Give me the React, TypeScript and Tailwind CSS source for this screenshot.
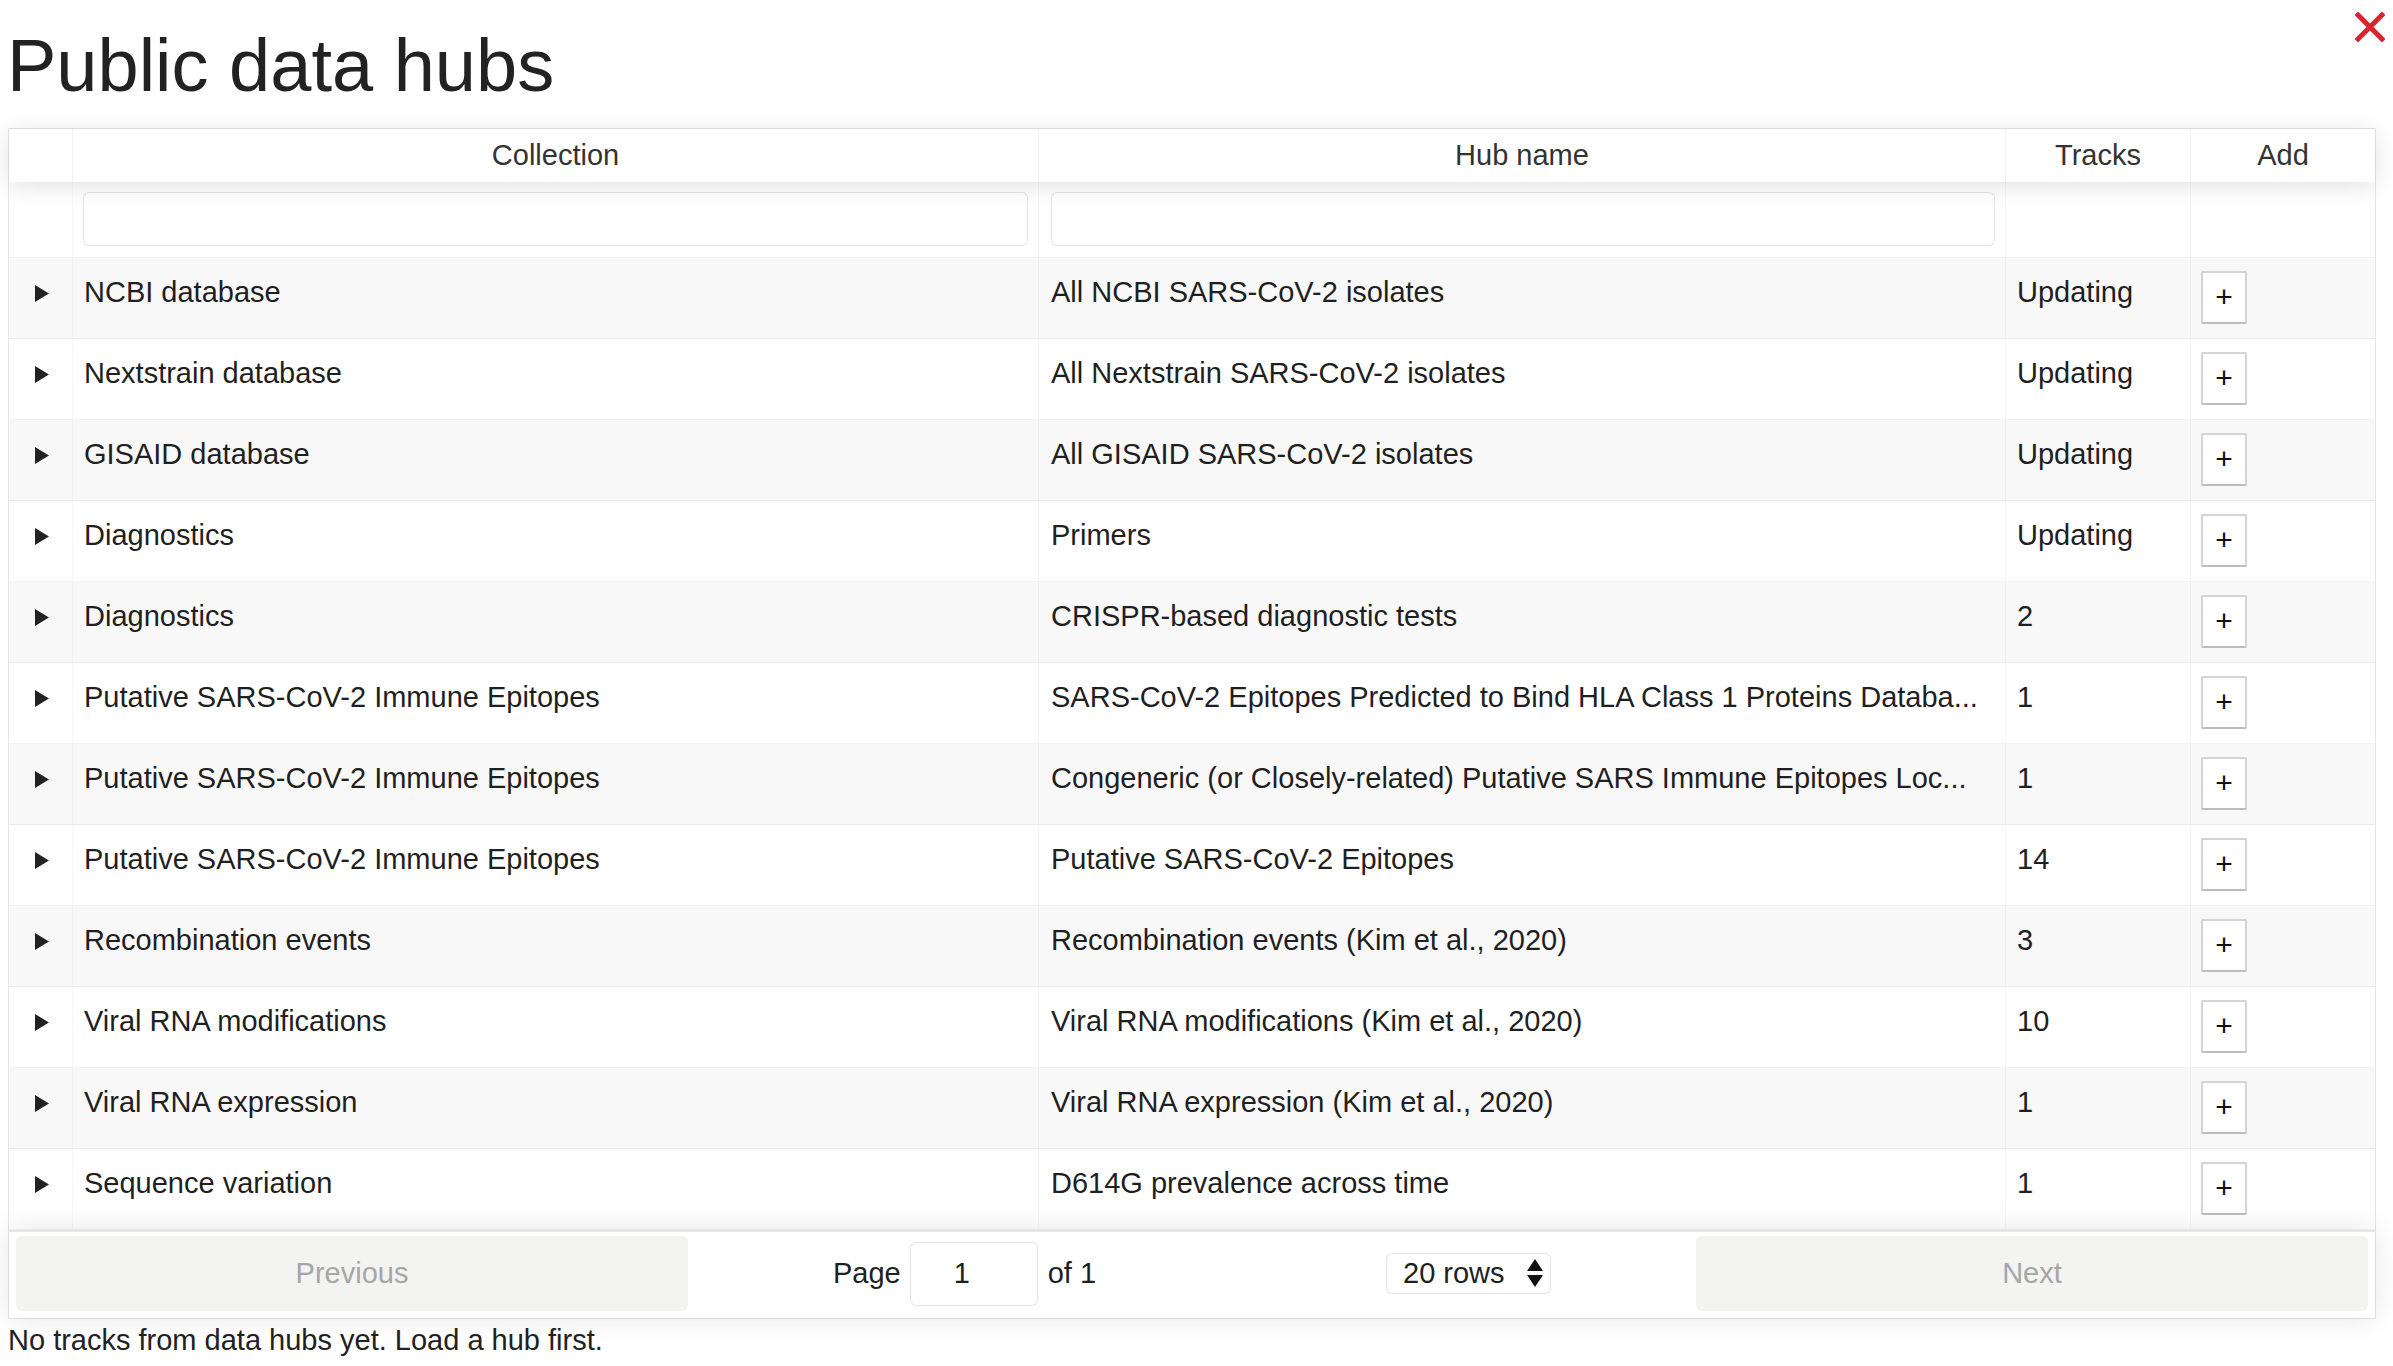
import React from "react";

type Row = { collection: string; hub: string; tracks: string };

const rows: Row[] = [
  { collection: "NCBI database", hub: "All NCBI SARS-CoV-2 isolates", tracks: "Updating" },
  { collection: "Nextstrain database", hub: "All Nextstrain SARS-CoV-2 isolates", tracks: "Updating" },
  { collection: "GISAID database", hub: "All GISAID SARS-CoV-2 isolates", tracks: "Updating" },
  { collection: "Diagnostics", hub: "Primers", tracks: "Updating" },
  { collection: "Diagnostics", hub: "CRISPR-based diagnostic tests", tracks: "2" },
  { collection: "Putative SARS-CoV-2 Immune Epitopes", hub: "SARS-CoV-2 Epitopes Predicted to Bind HLA Class 1 Proteins Databa...", tracks: "1" },
  { collection: "Putative SARS-CoV-2 Immune Epitopes", hub: "Congeneric (or Closely-related) Putative SARS Immune Epitopes Loc...", tracks: "1" },
  { collection: "Putative SARS-CoV-2 Immune Epitopes", hub: "Putative SARS-CoV-2 Epitopes", tracks: "14" },
  { collection: "Recombination events", hub: "Recombination events (Kim et al., 2020)", tracks: "3" },
  { collection: "Viral RNA modifications", hub: "Viral RNA modifications (Kim et al., 2020)", tracks: "10" },
  { collection: "Viral RNA expression", hub: "Viral RNA expression (Kim et al., 2020)", tracks: "1" },
  { collection: "Sequence variation", hub: "D614G prevalence across time", tracks: "1" },
];

const grid = "grid grid-cols-[64px_966px_967px_185px_1fr]";

export default function App() {
  return (
    <div className="relative w-[2393px] h-[1366px] bg-white text-[#1f1f1f] font-['Liberation_Sans',Arial,sans-serif] overflow-hidden">
      <button className="absolute left-[2355px] top-[12px] w-[30px] h-[30px]" aria-label="close">
        <svg width="30" height="30" viewBox="0 0 30 30">
          <path d="M3 3 L27 27 M27 3 L3 27" stroke="#d9232e" strokeWidth="5" strokeLinecap="square" />
        </svg>
      </button>

      <h1 className="pl-[7px] pt-[29px] text-[74px] leading-[74px] font-normal text-[#222]">Public data hubs</h1>

      <div className="ml-[8px] mt-[25px] w-[2368px] border border-[rgba(0,0,0,0.1)] text-[29px] leading-[33px]">
        {/* header */}
        <div className={`${grid} relative z-10 h-[53px] bg-white shadow-[0_4px_24px_0_rgba(0,0,0,0.12)] text-[#333]`}>
          <div className="border-r border-[rgba(0,0,0,0.05)]" />
          <div className="flex items-center justify-center border-r border-[rgba(0,0,0,0.05)]">Collection</div>
          <div className="flex items-center justify-center border-r border-[rgba(0,0,0,0.05)]">Hub name</div>
          <div className="flex items-center justify-center border-r border-[rgba(0,0,0,0.05)]">Tracks</div>
          <div className="flex items-center justify-center">Add</div>
        </div>
        {/* filters */}
        <div className={`${grid} h-[76px] bg-white border-b border-[rgba(0,0,0,0.05)]`}>
          <div className="border-r border-[rgba(0,0,0,0.03)]" />
          <div className="px-[10px] pt-[10px] border-r border-[rgba(0,0,0,0.03)]">
            <input className="w-full h-[54px] border border-[rgba(0,0,0,0.1)] rounded-[6px] bg-white outline-none" />
          </div>
          <div className="pl-[12px] pr-[10px] pt-[10px] border-r border-[rgba(0,0,0,0.03)]">
            <input className="w-full h-[54px] border border-[rgba(0,0,0,0.1)] rounded-[6px] bg-white outline-none" />
          </div>
          <div className="border-r border-[rgba(0,0,0,0.03)]" />
          <div />
        </div>
        {/* body */}
        {rows.map((r, i) => (
          <div
            key={i}
            className={`${grid} h-[81px] border-b border-[rgba(0,0,0,0.05)] ${i % 2 === 0 ? "bg-[#f8f8f8]" : "bg-white"}`}
          >
            <div className="pl-[26px] pt-[27px] border-r border-[rgba(0,0,0,0.03)]">
              <svg width="14" height="17" viewBox="0 0 14 17">
                <polygon points="0,0 14,8.5 0,17" fill="#222" />
              </svg>
            </div>
            <div className="pl-[11px] pr-[10px] pt-[18px] whitespace-nowrap overflow-hidden text-ellipsis border-r border-[rgba(0,0,0,0.03)]">
              {r.collection}
            </div>
            <div className="pl-[12px] pr-[8px] pt-[18px] whitespace-nowrap overflow-hidden text-ellipsis border-r border-[rgba(0,0,0,0.03)]">
              {r.hub}
            </div>
            <div className="pl-[11px] pt-[18px] border-r border-[rgba(0,0,0,0.03)]">{r.tracks}</div>
            <div className="pl-[10px] pt-[13px]">
              <button className="w-[46px] h-[53px] bg-white border-2 border-[#d4d4d4] border-b-[#bcbcbc] rounded-[2px] flex items-center justify-center text-[30px] leading-none text-[#111] pb-[2px]">
                +
              </button>
            </div>
          </div>
        ))}
        {/* pagination */}
        <div className="relative z-10 flex items-stretch h-[88px] bg-white border-t-2 border-[rgba(0,0,0,0.1)] px-[7px] pt-[4px] pb-[7px] shadow-[0_0_30px_0_rgba(0,0,0,0.1)]">
          <div className="flex-1">
            <button className="w-full h-full rounded-[6px] bg-[#f3f3f2] text-[#a6a6a6]">Previous</button>
          </div>
          <div className="flex-[1.5] flex items-center justify-around">
            <div className="flex items-center mx-[10px]">
              <span>Page</span>
              <input
                readOnly
                value="1"
                className="ml-[9px] mr-[10px] w-[128px] h-[64px] border border-[rgba(0,0,0,0.1)] rounded-[6px] bg-white text-center pl-[4px] pr-[28px] outline-none text-[29px]"
              />
              <span>of 1</span>
            </div>
            <div className="mx-[10px] flex items-center w-[165px] h-[41px] border border-[rgba(0,0,0,0.1)] rounded-[6px] bg-white pl-[16px] pr-[4px]">
              <span className="flex-1">20 rows</span>
              <svg width="18" height="29" viewBox="0 0 18 29" className="mr-[2px]">
                <polygon points="9,0 17,12 1,12" fill="#111" />
                <polygon points="1,16 17,16 9,28" fill="#111" />
              </svg>
            </div>
          </div>
          <div className="flex-1">
            <button className="w-full h-full rounded-[6px] bg-[#f3f3f2] text-[#a6a6a6]">Next</button>
          </div>
        </div>
      </div>

      <p className="pl-[8px] mt-[5px] text-[29px] leading-[33px] text-[#222]">No tracks from data hubs yet. Load a hub first.</p>
    </div>
  );
}
